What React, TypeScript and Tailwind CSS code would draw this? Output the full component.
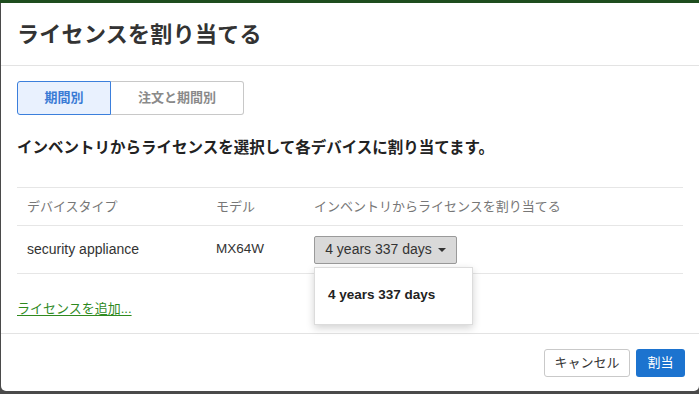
import { useState } from "react";

const font = { fontFamily: '"Liberation Sans", "Noto Sans CJK JP", sans-serif' };

const App: React.FC = () => {
  const [tab, setTab] = useState<number>(0);

  return (
    <div
      className="h-[394px] w-[699px] overflow-hidden border-t-[3px] border-t-[#1e4d1e] bg-[#4a4a4a] pl-[1px]"
      style={font}
    >
      <div className="relative flex h-[388px] flex-col rounded-bl-[5px] rounded-br-[5px] bg-white">
        {/* ヘッダー */}
        <div className="flex h-[63px] items-center border-b border-[#e3e3e3] px-4">
          <h1 className="text-[22px] font-bold tracking-[0.3px] text-[#333]">ライセンスを割り当てる</h1>
        </div>

        {/* 本文 */}
        <div className="flex-1 px-4 pt-[15px]">
          <div className="flex h-[34px] w-[227px] text-[13px] font-bold">
            <button
              onClick={() => setTab(0)}
              className={`w-[94px] rounded-l-[3px] border ${
                tab === 0 ? "border-[#3b7fdc] bg-[#e9f1fe] text-[#3a7bd5]" : "border-[#c8c8c8] text-[#8a8a8a]"
              }`}
            >
              期間別
            </button>
            <button
              onClick={() => setTab(1)}
              className={`flex-1 rounded-r-[3px] border border-l-0 ${
                tab === 1 ? "border-[#3b7fdc] bg-[#e9f1fe] text-[#3a7bd5]" : "border-[#c8c8c8] text-[#8a8a8a]"
              }`}
            >
              注文と期間別
            </button>
          </div>

          <p className="mt-[24px] text-[15.5px] font-bold leading-[18px] text-[#222]">
            インベントリからライセンスを選択して各デバイスに割り当てます。
          </p>

          {/* テーブル */}
          <div className="mt-[30px] border-t border-[#e6e6e6] text-[13px]">
            <div className="flex h-[38px] items-center border-b border-[#e6e6e6] text-[#777]">
              <div className="w-[199px] pl-[10px]">デバイスタイプ</div>
              <div className="w-[98px]">モデル</div>
              <div>インベントリからライセンスを割り当てる</div>
            </div>
            <div className="flex h-[48px] items-center border-b border-[#e6e6e6] text-[14px] text-[#333]">
              <div className="w-[199px] pl-[10px]">security appliance</div>
              <div className="w-[98px] text-[13.5px]">MX64W</div>
              <div className="relative">
                <button className="flex h-[28px] w-[143px] items-center justify-center gap-[6px] rounded-[2px] border border-[#9a9a9a] bg-[#d9d9d9] text-[14px] text-[#333]">
                  4 years 337 days
                  <span className="mt-[1px] h-0 w-0 border-x-[4px] border-t-[4px] border-x-transparent border-t-[#333]" />
                </button>
                <div className="absolute left-0 top-[31px] z-10 flex h-[58px] w-[159px] items-center border border-[#dcdcdc] bg-white pl-[13px] text-[13.5px] font-bold text-[#222] shadow-[0_3px_8px_rgba(0,0,0,0.18)]">
                  4 years 337 days
                </div>
              </div>
            </div>
          </div>

          <a href="#" className="mt-[25px] inline-block text-[13px] text-[#2f8a1f] underline underline-offset-[2px]">
            ライセンスを追加...
          </a>
        </div>

        {/* フッター */}
        <div className="flex h-[58px] items-center justify-end gap-[6px] border-t border-[#e3e3e3] pr-[14px]">
          <button className="h-[28px] w-[86px] rounded-[3px] border border-[#c9c9c9] bg-white text-[13px] text-[#333]">
            キャンセル
          </button>
          <button className="h-[28px] w-[49px] rounded-[3px] bg-[#1c73cf] text-[13px] text-white">割当</button>
        </div>
      </div>
    </div>
  );
};

export default App;
